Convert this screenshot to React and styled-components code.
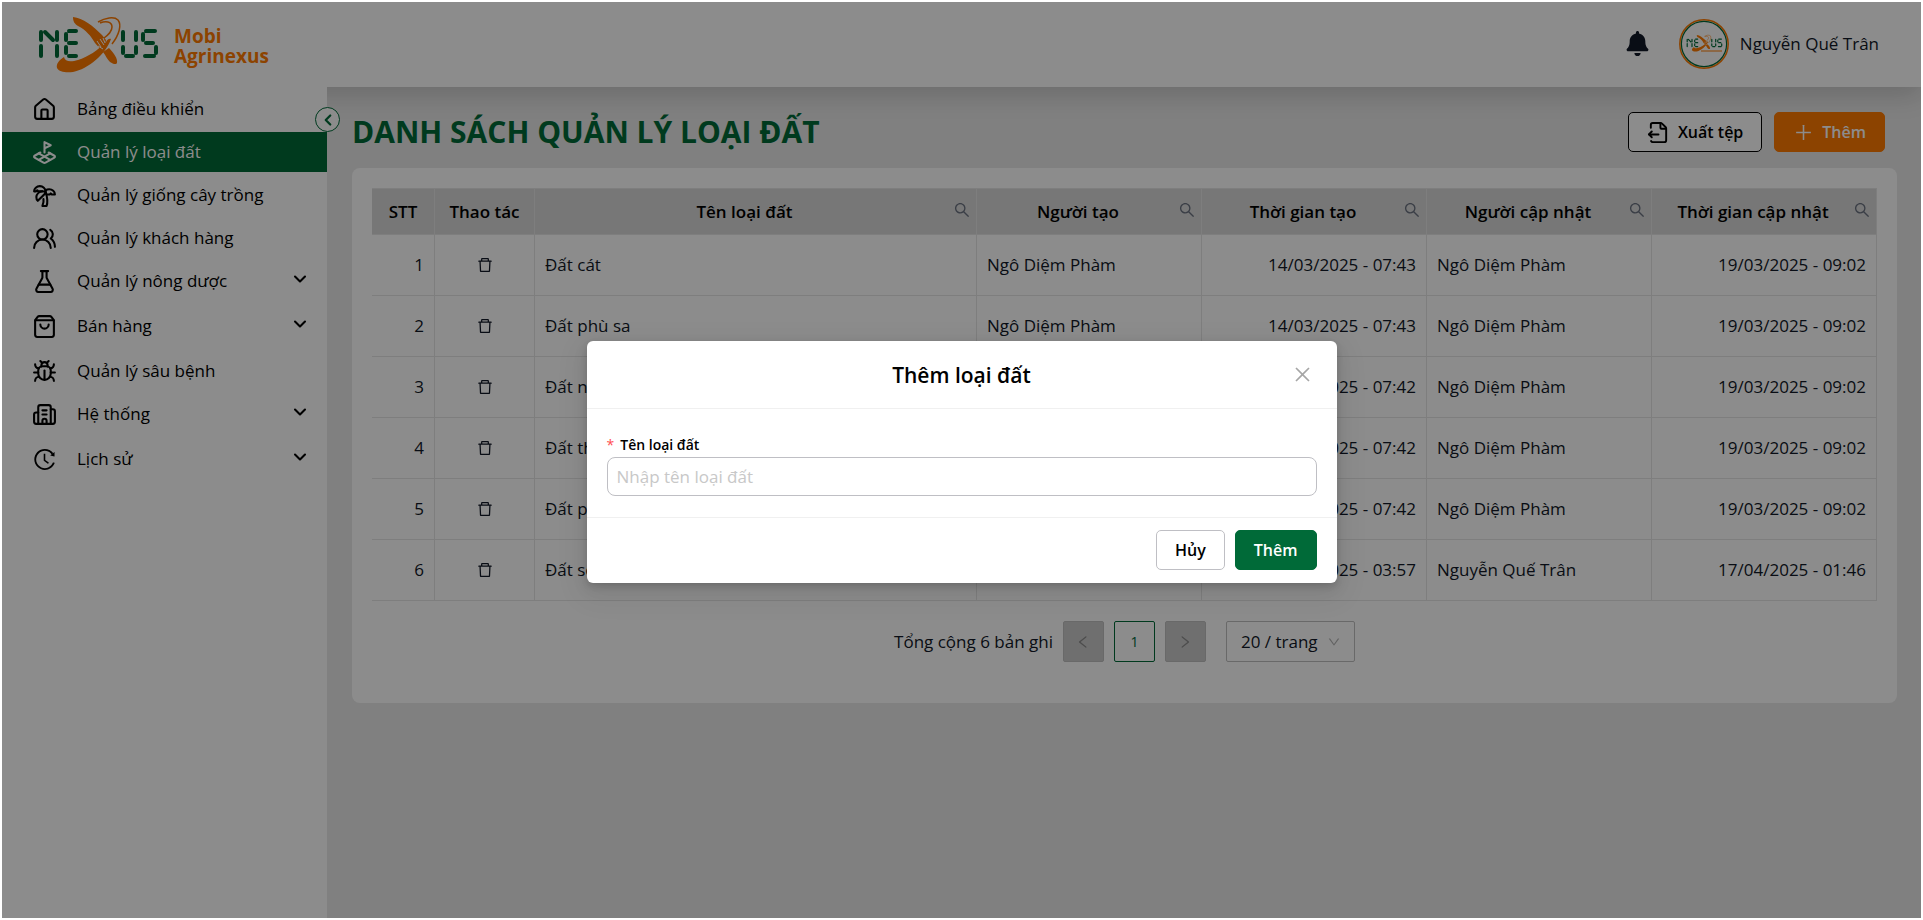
import React from 'react';
import styled, { createGlobalStyle } from 'styled-components';
import {
  House,
  LandPlot,
  TreePalm,
  UsersRound,
  FlaskConical,
  ShoppingBag,
  Bug,
  Building2,
  ChevronDown,
  ChevronLeft,
  FileOutput
} from 'lucide-react';
import { FaBell } from 'react-icons/fa';
import {
  AiOutlineHistory,
  AiOutlinePlus,
  AiOutlineSearch,
  AiOutlineDelete,
  AiOutlineClose,
  AiOutlineLeft,
  AiOutlineRight,
  AiOutlineDown
} from 'react-icons/ai';

const colors = {
  green: '#006a38',
  orange: '#ff7a00',
  text: '#111827',
  page: '#e9e9e9',
  line: '#e6e6e6',
  head: '#d9d9d9',
  border: '#bfbfc4'
};

const GlobalStyle = createGlobalStyle`
  *, *::before, *::after {
    box-sizing: border-box;
  }

  body {
    margin: 0;
    background: #fff;
    color: ${colors.text};
    font-family: "Open Sans", "Noto Sans", sans-serif;
    font-size: 17px;
    line-height: 24px;
  }

  button, input, select {
    font-family: inherit;
    font-size: inherit;
    color: inherit;
  }

  button {
    cursor: pointer;
  }
`;

const Frame = styled.div`
  height: 100vh;
  padding: 2px;
`;

const Page = styled.div`
  position: relative;
  height: 100%;
  display: flex;
  flex-direction: column;
  overflow: hidden;
  background: ${colors.page};
`;

const Header = styled.header`
  flex: none;
  display: flex;
  align-items: center;
  justify-content: space-between;
  height: 85px;
  padding: 0 42px 2px 35px;
  background: #fff;
  box-shadow: 0 8px 24px rgba(0, 0, 0, 0.16);
`;

const Brand = styled.a`
  display: flex;
  align-items: center;
  gap: 14px;
  color: ${colors.orange};
  font-size: 19px;
  font-weight: 700;
  line-height: 20px;
  text-decoration: none;
`;

const BrandName = styled.span`
  padding-top: 4px;
`;

const Account = styled.div`
  display: flex;
  align-items: center;
  gap: 11px;
`;

const BellButton = styled.button`
  display: flex;
  margin-right: 18px;
  padding: 0;
  border: 0;
  background: none;
`;

const Columns = styled.div`
  flex: 1;
  display: flex;
  min-height: 0;
`;

const Sidebar = styled.aside`
  position: relative;
  flex: none;
  width: 325px;
  padding-top: 2px;
  background: #fff;
`;

const Menu = styled.nav`
  display: flex;
  flex-direction: column;
  gap: 3px;
`;

const MenuItem = styled.a`
  display: flex;
  align-items: center;
  gap: 20px;
  height: 40px;
  margin-bottom: ${(props) => (props.$sub ? '2px' : '0')};
  padding: 0 17px 0 30px;
  background: ${(props) => (props.$active ? colors.green : 'transparent')};
  color: ${(props) => (props.$active ? '#fff' : '#000')};
  font-weight: 500;
  text-decoration: none;

  svg {
    flex: none;
  }
`;

const MenuLabel = styled.span`
  flex: 1;
`;

const MenuArrow = styled(ChevronDown)`
  margin-bottom: 5px;
`;

// sits on the line between the sidebar and the content
const CollapseButton = styled.button`
  position: absolute;
  top: 20px;
  right: -13px;
  display: flex;
  align-items: center;
  justify-content: center;
  width: 25px;
  height: 25px;
  padding: 0;
  border: 1px solid ${colors.green};
  border-radius: 50%;
  background: #fff;
  color: ${colors.green};
`;

const Content = styled.main`
  flex: 1;
  min-width: 0;
  padding: 25px 24px 24px 25px;
`;

const TitleBar = styled.div`
  display: flex;
  align-items: center;
  justify-content: space-between;
  margin-bottom: 16px;
  padding-right: 12px;
`;

const Title = styled.h1`
  margin: 0;
  color: ${colors.green};
  font-size: 30px;
  font-weight: 700;
  line-height: 40px;
`;

const Actions = styled.div`
  display: flex;
  gap: 12px;
`;

const buttonColors = {
  plain: ['#fff', '#000', '#000'],
  quiet: ['#fff', '#000', colors.border],
  orange: [colors.orange, '#fff', colors.orange],
  green: [colors.green, '#fff', colors.green]
};

const Button = styled.button`
  display: inline-flex;
  align-items: center;
  justify-content: center;
  gap: 8px;
  height: 40px;
  padding: 0 18px;
  border: 1px solid ${(props) => buttonColors[props.$kind][2]};
  border-radius: 5px;
  background: ${(props) => buttonColors[props.$kind][0]};
  color: ${(props) => buttonColors[props.$kind][1]};
  font-size: 16px;
  font-weight: 600;
`;

const Card = styled.section`
  padding: 20px 20px 41px;
  border-radius: 8px;
  background: #fff;
`;

const Table = styled.table`
  width: 100%;
  border-collapse: separate;
  border-spacing: 0;
  table-layout: fixed;

  th, td {
    border-right: 1px solid ${colors.line};
    border-bottom: 1px solid ${colors.line};
  }
`;

const Th = styled.th`
  width: ${(props) => props.$width || 'auto'};
  height: 47px;
  padding: 0 10px;
  border-top: 1px solid ${colors.line};
  background: ${colors.head};
  color: #000;
  font-weight: 600;
`;

const ThInner = styled.div`
  display: flex;
  align-items: center;
  justify-content: center;
`;

const ThText = styled.span`
  flex: 1;
  white-space: nowrap;
`;

const Td = styled.td`
  height: 61px;
  padding: 0 10px;
  text-align: ${(props) => props.$align || 'left'};
`;

const IconButton = styled.button`
  display: flex;
  padding: 0;
  border: 0;
  background: none;
  color: ${(props) => props.$color || 'inherit'};
`;

const SearchButton = styled(IconButton)`
  margin: 0 -5px 4px 9px;
`;

const DeleteButton = styled(IconButton)`
  margin: 0 auto;
`;

const Pagination = styled.div`
  display: flex;
  align-items: center;
  justify-content: center;
  gap: 10px;
  margin-top: 20px;
`;

const PageButton = styled.button`
  display: flex;
  align-items: center;
  justify-content: center;
  width: 41px;
  height: 41px;
  border: 1px solid ${(props) => (props.$current ? colors.green : '#bfbfbf')};
  border-radius: 2px;
  background: ${(props) => (props.$current ? '#fff' : '#cbcbcb')};
  color: ${(props) => (props.$current ? colors.green : '#8c8c8c')};
  font-size: 14px;
`;

const SelectBox = styled.div`
  display: grid;
  align-items: center;
  margin-left: 10px;

  select, svg {
    grid-area: 1 / 1;
  }

  svg {
    justify-self: end;
    margin-right: 14px;
    color: #b3b3b3;
    pointer-events: none;
  }
`;

const Select = styled.select`
  width: 129px;
  height: 41px;
  padding: 0 14px;
  border: 1px solid #bfbfbf;
  border-radius: 2px;
  background: #fff;
  appearance: none;
`;

const Mask = styled.div`
  position: absolute;
  inset: 0;
  display: flex;
  align-items: center;
  justify-content: center;
  padding-top: 4px;
  background: rgba(0, 0, 0, 0.45);
`;

const Dialog = styled.form`
  width: 750px;
  max-width: 100%;
  border-radius: 6px;
  background: #fff;
  box-shadow:
    0 6px 16px rgba(0, 0, 0, 0.08),
    0 3px 6px rgba(0, 0, 0, 0.12),
    0 9px 28px 8px rgba(0, 0, 0, 0.05);
`;

const DialogHeader = styled.div`
  display: grid;
  grid-template-columns: 1fr auto 1fr;
  align-items: center;
  height: 68px;
  padding: 0 24px;
  border-bottom: 1px solid #f0f0f0;

  button {
    grid-column: 3;
    justify-self: end;
  }
`;

const DialogTitle = styled.h2`
  grid-column: 2;
  margin: 0;
  color: #000;
  font-size: 21px;
  font-weight: 600;
  line-height: 28px;
`;

const DialogBody = styled.div`
  display: flex;
  flex-direction: column;
  padding: 24px 20px 21px;
`;

const FieldLabel = styled.label`
  display: flex;
  gap: 6px;
  color: #000;
  font-size: 14px;
  font-weight: 600;
`;

const Required = styled.span`
  color: #ff4d4f;
  font-weight: 400;
`;

const TextInput = styled.input`
  height: 39px;
  padding: 0 9px;
  border: 1px solid ${colors.border};
  border-radius: 8px;
  outline: none;

  &::placeholder {
    color: #c8c8c8;
  }
`;

const DialogFooter = styled.div`
  display: flex;
  justify-content: flex-end;
  gap: 10px;
  padding: 12px 20px 13px;
  border-top: 1px solid #f0f0f0;
`;

const menu = [
  { label: 'Bảng điều khiển', icon: House },
  { label: 'Quản lý loại đất', icon: LandPlot, active: true },
  { label: 'Quản lý giống cây trồng', icon: TreePalm },
  { label: 'Quản lý khách hàng', icon: UsersRound },
  { label: 'Quản lý nông dược', icon: FlaskConical, sub: true },
  { label: 'Bán hàng', icon: ShoppingBag, sub: true },
  { label: 'Quản lý sâu bệnh', icon: Bug },
  { label: 'Hệ thống', icon: Building2, sub: true },
  { label: 'Lịch sử', icon: AiOutlineHistory, sub: true }
];

const headings = [
  { label: 'STT', width: '63px' },
  { label: 'Thao tác', width: '100px' },
  { label: 'Tên loại đất', search: true },
  { label: 'Người tạo', width: '225px', search: true },
  { label: 'Thời gian tạo', width: '225px', search: true },
  { label: 'Người cập nhật', width: '225px', search: true },
  { label: 'Thời gian cập nhật', width: '225px', search: true }
];

const rows = [
  ['Đất cát', 'Ngô Diệm Phàm', '14/03/2025 - 07:43', 'Ngô Diệm Phàm', '19/03/2025 - 09:02'],
  ['Đất phù sa', 'Ngô Diệm Phàm', '14/03/2025 - 07:43', 'Ngô Diệm Phàm', '19/03/2025 - 09:02'],
  ['Đất nâu', 'Ngô Diệm Phàm', '14/03/2025 - 07:42', 'Ngô Diệm Phàm', '19/03/2025 - 09:02'],
  ['Đất thịt', 'Ngô Diệm Phàm', '14/03/2025 - 07:42', 'Ngô Diệm Phàm', '19/03/2025 - 09:02'],
  ['Đất phèn', 'Ngô Diệm Phàm', '14/03/2025 - 07:42', 'Ngô Diệm Phàm', '19/03/2025 - 09:02'],
  ['Đất sét', 'Nguyễn Quế Trân', '17/04/2025 - 03:57', 'Nguyễn Quế Trân', '17/04/2025 - 01:46']
];

// segment-style letters with the orange swoosh standing in for the X
const LogoMark = () => (
  <>
    <g stroke={colors.green} strokeWidth='4' strokeLinecap='round' fill='none'>
      <path d='M4 18v8M4 32v10M8 18l8 8M20 18v8M20 32v10' />
      <path d='M29 20v6M29 33v6M32 17h7M32 29h7M32 42h7' />
      <path d='M86 18v8M86 33v6M89 42h7M99 18v8M99 33v6' />
      <path d='M109 17h9M106 20v6M109 29h7M119 33v6M108 42h9' />
    </g>
    <path
      d='M36 3C46 4 56 12 65 21L69 26L66 38L58 29C54 22 49 16 41 12C38 10 36 8 36 3ZM72 34C77 39 81 45 80 49C79 51 76 50 73 48C70 45 69 42 66 38Z'
      fill={colors.orange}
    />
    <path
      d='M27 43C22 46 19 50 20 54C22 58 29 59 36 58C51 55 69 40 74 25C72 24 70 26 69 28C61 36 51 43 41 46C34 48 28 48 27 43Z'
      fill={colors.orange}
    />
    <path
      d='M61 8C68 4 77 2 81 6C85 11 82 21 75 30M63 9C68 7 75 7 75 13C75 18 71 21 67 24'
      fill='none'
      stroke={colors.orange}
      strokeWidth='1.5'
    />
    <path d='M60 27l4 6M63 25l4 6M61 32l5 3M66 24l2 5' stroke='#fff' strokeWidth='1' fill='none' />
  </>
);

const Logo = () => (
  <svg width='123' height='60' viewBox='0 0 123 60' aria-hidden='true'>
    <LogoMark />
  </svg>
);

const Avatar = () => (
  <svg width='50' height='50' viewBox='0 0 50 50' aria-hidden='true'>
    <circle cx='25' cy='25' r='24.2' fill='#fff' stroke={colors.orange} strokeWidth='1.5' />
    <circle cx='25' cy='25' r='22.6' fill='none' stroke={colors.green} strokeWidth='1.2' />
    <g transform='translate(7 15) scale(0.3)'>
      <LogoMark />
    </g>
    <path d='M22 32h21' stroke={colors.orange} strokeWidth='1' />
  </svg>
);

const SideMenu = () => (
  <Sidebar>
    <Menu>
      {menu.map(({ label, icon: Icon, active, sub }) => (
        <MenuItem key={label} href='#' $active={active} $sub={sub}>
          <Icon size={25} />
          <MenuLabel>{label}</MenuLabel>
          {sub && <MenuArrow size={20} strokeWidth={2.5} />}
        </MenuItem>
      ))}
    </Menu>
    <CollapseButton type='button' aria-label='Thu gọn'>
      <ChevronLeft size={18} strokeWidth={3} />
    </CollapseButton>
  </Sidebar>
);

const SoilTable = () => (
  <Table>
    <thead>
      <tr>
        {headings.map(({ label, width, search }) => (
          <Th key={label} $width={width}>
            <ThInner>
              <ThText>{label}</ThText>
              {search && (
                <SearchButton type='button' $color='#6b7280' aria-label='Tìm kiếm'>
                  <AiOutlineSearch size={18} />
                </SearchButton>
              )}
            </ThInner>
          </Th>
        ))}
      </tr>
    </thead>
    <tbody>
      {rows.map(([name, creator, created, editor, updated], index) => (
        <tr key={name}>
          <Td $align='right'>{index + 1}</Td>
          <Td>
            <DeleteButton type='button' aria-label='Xóa'>
              <AiOutlineDelete size={18} />
            </DeleteButton>
          </Td>
          <Td>{name}</Td>
          <Td>{creator}</Td>
          <Td $align='right'>{created}</Td>
          <Td>{editor}</Td>
          <Td $align='right'>{updated}</Td>
        </tr>
      ))}
    </tbody>
  </Table>
);

const Pager = () => (
  <Pagination>
    <span>Tổng cộng 6 bản ghi</span>
    <PageButton type='button' aria-label='Trang trước'><AiOutlineLeft size={16} /></PageButton>
    <PageButton type='button' $current>1</PageButton>
    <PageButton type='button' aria-label='Trang sau'><AiOutlineRight size={16} /></PageButton>
    <SelectBox>
      <Select aria-label='Số bản ghi mỗi trang'>
        <option>20 / trang</option>
      </Select>
      <AiOutlineDown size={14} />
    </SelectBox>
  </Pagination>
);

const AddDialog = () => (
  <Mask>
    <Dialog role='dialog' aria-labelledby='dialog-title'>
      <DialogHeader>
        <DialogTitle id='dialog-title'>Thêm loại đất</DialogTitle>
        <IconButton type='button' $color='#a6a6a6' aria-label='Đóng'>
          <AiOutlineClose size={21} />
        </IconButton>
      </DialogHeader>
      <DialogBody>
        <FieldLabel htmlFor='soil-name'>
          <Required>*</Required>
          Tên loại đất
        </FieldLabel>
        <TextInput id='soil-name' type='text' placeholder='Nhập tên loại đất' />
      </DialogBody>
      <DialogFooter>
        <Button type='button' $kind='quiet'>Hủy</Button>
        <Button type='button' $kind='green'>Thêm</Button>
      </DialogFooter>
    </Dialog>
  </Mask>
);

const App = () => (
  <Frame>
    <GlobalStyle />
    <Page>
      <Header>
        <Brand href='#'>
          <Logo />
          <BrandName>Mobi<br />Agrinexus</BrandName>
        </Brand>
        <Account>
          <BellButton type='button' aria-label='Thông báo'><FaBell size={25} /></BellButton>
          <Avatar />
          <span>Nguyễn Quế Trân</span>
        </Account>
      </Header>
      <Columns>
        <SideMenu />
        <Content>
          <TitleBar>
            <Title>DANH SÁCH QUẢN LÝ LOẠI ĐẤT</Title>
            <Actions>
              <Button type='button' $kind='plain'><FileOutput size={23} />Xuất tệp</Button>
              <Button type='button' $kind='orange'><AiOutlinePlus size={21} />Thêm</Button>
            </Actions>
          </TitleBar>
          <Card>
            <SoilTable />
            <Pager />
          </Card>
        </Content>
      </Columns>
      <AddDialog />
    </Page>
  </Frame>
);

export default App;
